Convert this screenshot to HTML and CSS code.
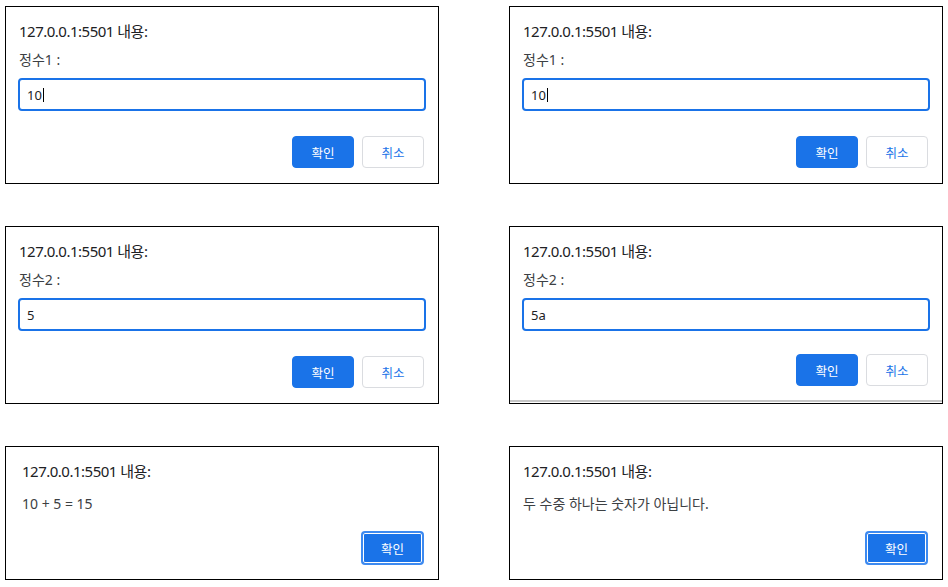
FILE: index.html
```html
<!DOCTYPE html>
<html lang="ko">
<head>
<meta charset="utf-8">
<title>prompt dialogs</title>
<link rel="stylesheet" href="styles.css">
</head>
<body>
<div class="sheet">
  <section class="dialog">
    <p class="dialog__title">127.0.0.1:5501 내용:</p>
    <p class="dialog__label">정수1 :</p>
    <div class="field"><span>10</span><span class="caret"></span></div>
    <div class="actions"><button class="btn btn--primary">확인</button><button class="btn btn--secondary">취소</button></div>
  </section>
  <section class="dialog">
    <p class="dialog__title">127.0.0.1:5501 내용:</p>
    <p class="dialog__label">정수1 :</p>
    <div class="field"><span>10</span><span class="caret"></span></div>
    <div class="actions"><button class="btn btn--primary">확인</button><button class="btn btn--secondary">취소</button></div>
  </section>
  <section class="dialog">
    <p class="dialog__title">127.0.0.1:5501 내용:</p>
    <p class="dialog__label">정수2 :</p>
    <div class="field"><span>5</span></div>
    <div class="actions"><button class="btn btn--primary">확인</button><button class="btn btn--secondary">취소</button></div>
  </section>
  <section class="dialog dialog--clipped">
    <p class="dialog__title">127.0.0.1:5501 내용:</p>
    <p class="dialog__label">정수2 :</p>
    <div class="field"><span>5a</span></div>
    <div class="actions"><button class="btn btn--primary">확인</button><button class="btn btn--secondary">취소</button></div>
  </section>
  <section class="dialog dialog--alert dialog--inset">
    <p class="dialog__title">127.0.0.1:5501 내용:</p>
    <p class="dialog__message">10 + 5 = 15</p>
    <div class="actions"><button class="btn btn--primary btn--focused">확인</button></div>
  </section>
  <section class="dialog dialog--alert">
    <p class="dialog__title">127.0.0.1:5501 내용:</p>
    <p class="dialog__message">두 수중 하나는 숫자가 아닙니다.</p>
    <div class="actions"><button class="btn btn--primary btn--focused">확인</button></div>
  </section>
</div>
</body>
</html>
```
FILE: styles.css
```css
* { box-sizing: border-box; }

body {
  margin: 0;
  background: #fff;
  font-family: "Noto Sans", "Noto Sans CJK KR", sans-serif;
  color: #202124;
}

.sheet {
  display: grid;
  grid-template-columns: 434px 434px;
  column-gap: 70px;
  row-gap: 42px;
  padding: 6px 0 0 5px;
  align-items: start;
}

.dialog {
  border: 1px solid #000;
  display: flex;
  flex-direction: column;
  padding: 14px 12px 15px 12px;
  background: #fff;
}

.dialog__title {
  margin: 0;
  font-size: 15px;
  letter-spacing: -0.5px;
  line-height: 20px;
  padding-left: 1px;
  color: #202124;
}

.dialog__label {
  margin: 10px 0 0;
  font-size: 14px;
  line-height: 18px;
  padding-left: 1px;
  color: #3c4043;
}

.field {
  margin-top: 9px;
  height: 33px;
  border: 2px solid #1a73e8;
  border-radius: 4px;
  display: flex;
  align-items: center;
  padding-left: 7px;
  font-size: 13px;
  color: #202124;
}

.caret {
  width: 1px;
  height: 14px;
  background: #000;
  margin-left: 1px;
}

.actions {
  margin-top: 25px;
  display: flex;
  justify-content: flex-end;
  gap: 8px;
  padding-right: 2px;
}

.btn {
  width: 62px;
  height: 32px;
  border-radius: 4px;
  font-family: inherit;
  font-size: 12.5px;
  display: flex;
  align-items: center;
  justify-content: center;
  padding: 0;
  cursor: default;
}

.btn--primary {
  background: #1a73e8;
  color: #fff;
  border: 1px solid #1a73e8;
}

.btn--secondary {
  background: #fff;
  color: #1a73e8;
  border: 1px solid #dadce0;
}

.btn--focused {
  width: 63px;
  height: 34px;
  border: 2px solid #3d8af0;
  box-shadow: inset 0 0 0 1px #fff;
}

.dialog__message {
  margin: 14px 0 0;
  font-size: 14px;
  line-height: 18px;
  padding-left: 1px;
  color: #3c4043;
}

.dialog--alert {
  padding-bottom: 14px;
}

.dialog--alert .actions {
  margin-top: 18px;
}

.dialog--inset {
  padding-left: 15px;
}

.dialog--clipped {
  padding-bottom: 17px;
  box-shadow: inset 0 -1px 0 #fff, inset 0 -3px 0 #c6c6c6;
}

.dialog--clipped .actions {
  margin-top: 23px;
}
```
